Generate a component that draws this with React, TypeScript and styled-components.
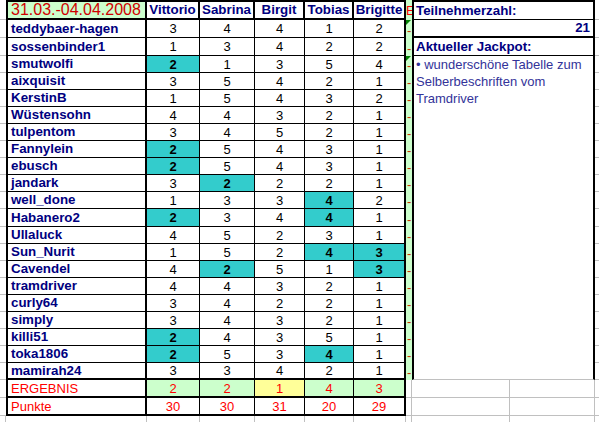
import React from "react";
import styled, { createGlobalStyle } from "styled-components";

const GlobalStyle = createGlobalStyle`
  html, body { margin: 0; padding: 0; background: #ffffff; }
  body { font-family: "Liberation Sans", Arial, sans-serif; overflow: hidden; }
`;

const NAVY = "#000080";
const INDIGO = "#333399";
const RED = "#ff0000";
const DATE_RED = "#d00000";
const TEAL = "#33cccc";
const LIGHT_GREEN = "#ccffcc";
const YELLOW = "#ffff99";
const GRID = "#c0c0c0";
const INK = "#000000";

const DATA_HEIGHTS = [18, 18, 17, 17, 17, 17, 17, 17, 17, 17, 17, 18, 17, 17, 17, 17, 17, 17, 17, 17, 17];
const ROW_HEIGHTS = [20, ...DATA_HEIGHTS, 18, 18, 6];

const PLAYERS = ["Vittorio", "Sabrina", "Birgit", "Tobias", "Brigitte"];

const ROWS: [string, number[], number[]][] = [
  ["teddybaer-hagen", [3, 4, 4, 1, 2], []],
  ["sossenbinder1", [1, 3, 4, 2, 2], []],
  ["smutwolfi", [2, 1, 3, 5, 4], [0]],
  ["aixquisit", [3, 5, 4, 2, 1], []],
  ["KerstinB", [1, 5, 4, 3, 2], []],
  ["Wüstensohn", [4, 4, 3, 2, 1], []],
  ["tulpentom", [3, 4, 5, 2, 1], []],
  ["Fannylein", [2, 5, 4, 3, 1], [0]],
  ["ebusch", [2, 5, 4, 3, 1], [0]],
  ["jandark", [3, 2, 2, 2, 1], [1]],
  ["well_done", [1, 3, 3, 4, 2], [3]],
  ["Habanero2", [2, 3, 4, 4, 1], [0, 3]],
  ["Ullaluck", [4, 5, 2, 3, 1], []],
  ["Sun_Nurit", [1, 5, 2, 4, 3], [3, 4]],
  ["Cavendel", [4, 2, 5, 1, 3], [1, 4]],
  ["tramdriver", [4, 4, 3, 2, 1], []],
  ["curly64", [3, 4, 2, 2, 1], []],
  ["simply", [3, 4, 3, 2, 1], []],
  ["killi51", [2, 4, 3, 5, 1], [0]],
  ["toka1806", [2, 5, 3, 4, 1], [0, 3]],
  ["mamirah24", [3, 3, 4, 2, 1], []],
];

const RESULT = [2, 2, 1, 4, 3];
const RESULT_WINNER = 2;
const POINTS = [30, 30, 31, 20, 29];
const FLAGGED_ROWS = [0, 2];

const RESULT_ROW = ROWS.length + 2;
const POINTS_ROW = ROWS.length + 3;
const REST_ROW = ROWS.length + 4;

const Sheet = styled.div`
  display: grid;
  grid-template-columns: 6px 141px 53px 55px 50px 49px 52px 6px 98px 85px 4px;
  grid-template-rows: ${ROW_HEIGHTS.map((h) => `${h}px`).join(" ")};
  width: 599px;
  height: 422px;
  overflow: hidden;
  background: #ffffff;
`;

const Cell = styled.div<{ $row: number }>`
  grid-row: ${(p) => p.$row};
  box-sizing: border-box;
  display: flex;
  align-items: center;
  min-width: 0;
  overflow: hidden;
  white-space: nowrap;
  line-height: 1;
  font-size: 13px;
`;

const GridCell = styled(Cell)<{ $col: number; $right?: boolean; $bottom?: boolean }>`
  grid-column: ${(p) => p.$col};
  border-right: ${(p) => (p.$right ? `1px solid ${GRID}` : "none")};
  border-bottom: ${(p) => (p.$bottom ? `1px solid ${GRID}` : "none")};
`;

const TitleCell = styled(Cell)`
  grid-column: 2;
  background: ${LIGHT_GREEN};
  color: ${DATE_RED};
  font-size: 16px;
  padding-left: 3px;
  border: 2px solid ${INK};
`;

const HeaderCell = styled(Cell)<{ $col: number }>`
  grid-column: ${(p) => p.$col};
  justify-content: center;
  color: ${NAVY};
  font-weight: bold;
  font-size: 13.33px;
  border-top: 2px solid ${INK};
  border-right: 2px solid ${INK};
  border-bottom: 2px solid ${INK};
`;

const NameCell = styled(Cell)<{ $last?: boolean }>`
  grid-column: 2;
  padding-left: 3px;
  color: ${NAVY};
  font-weight: bold;
  font-size: 13.33px;
  border-left: 2px solid ${INK};
  border-right: 2px solid ${INK};
  border-bottom: ${(p) => (p.$last ? 2 : 1)}px solid ${INK};
`;

const ScoreCell = styled(Cell)<{ $col: number; $hi?: boolean; $lastRow?: boolean; $lastCol?: boolean }>`
  grid-column: ${(p) => p.$col};
  justify-content: center;
  color: ${INK};
  background: ${(p) => (p.$hi ? TEAL : "#ffffff")};
  font-weight: ${(p) => (p.$hi ? "bold" : "normal")};
  border-right: ${(p) => (p.$lastCol ? 2 : 1)}px solid ${INK};
  border-bottom: ${(p) => (p.$lastRow ? 2 : 1)}px solid ${INK};
`;

const StripCell = styled(Cell)<{ $flag?: boolean; $head?: boolean }>`
  grid-column: 8;
  position: relative;
  background: ${LIGHT_GREEN};
  color: ${(p) => (p.$head ? RED : "#cc3300")};
  padding-left: ${(p) => (p.$head ? 0 : 1)}px;
  padding-top: ${(p) => (p.$head ? 0 : 2)}px;
  font-size: 13px;
  &::before {
    content: "";
    display: ${(p) => (p.$flag ? "block" : "none")};
    position: absolute;
    left: 0;
    top: 0;
    width: 0;
    height: 0;
    border-top: 5px solid #008000;
    border-right: 5px solid transparent;
  }
`;

const PanelLabel = styled(Cell)<{ $top?: boolean; $thickBottom?: boolean; $right?: boolean }>`
  grid-column: 9 / 11;
  justify-content: ${(p) => (p.$right ? "flex-end" : "flex-start")};
  padding: 0 3px 0 2px;
  color: ${NAVY};
  font-weight: bold;
  font-size: 13.33px;
  border-left: 2px solid ${INK};
  border-right: 2px solid ${INK};
  border-top: ${(p) => (p.$top ? `2px solid ${INK}` : "none")};
  border-bottom: ${(p) => (p.$thickBottom ? 2 : 1)}px solid ${INK};
`;

const PanelNote = styled.div`
  grid-column: 9 / 11;
  grid-row: 4 / ${RESULT_ROW};
  box-sizing: border-box;
  padding: 0 4px 0 2px;
  color: ${INDIGO};
  font-size: 13px;
  line-height: 17px;
  border-left: 2px solid ${INK};
  border-right: 2px solid ${INK};
  border-bottom: 1px solid ${GRID};
  overflow: hidden;
`;

const ResultLabel = styled(Cell)`
  grid-column: 2;
  padding-left: 3px;
  color: ${RED};
  border-left: 2px solid ${INK};
  border-right: 2px solid ${INK};
  border-bottom: 2px solid ${INK};
`;

const ResultCell = styled(Cell)<{ $col: number; $fill: string; $lastCol?: boolean }>`
  grid-column: ${(p) => p.$col};
  justify-content: center;
  color: ${RED};
  background: ${(p) => p.$fill};
  border-right: ${(p) => (p.$lastCol ? 2 : 1)}px solid ${INK};
  border-bottom: 2px solid ${INK};
`;

const Page = styled.main`
  display: block;
`;

export default function App() {
  const lastDataIndex = ROWS.length - 1;
  return (
    <Page>
      <GlobalStyle />
      <Sheet>
        {/* title row */}
        <GridCell $row={1} $col={1} $bottom />
        <TitleCell $row={1}>31.03.-04.04.2008</TitleCell>
        {PLAYERS.map((p, i) => (
          <HeaderCell key={p} $row={1} $col={3 + i}>
            {p}
          </HeaderCell>
        ))}
        <StripCell $row={1} $head>
          E
        </StripCell>
        <PanelLabel $row={1} $top>
          Teilnehmerzahl:
        </PanelLabel>
        <GridCell $row={1} $col={11} $bottom />

        {/* player rows */}
        {ROWS.map(([name, scores, hi], r) => {
          const row = r + 2;
          const last = r === lastDataIndex;
          return (
            <React.Fragment key={name}>
              <GridCell $row={row} $col={1} $bottom />
              <NameCell $row={row} $last={last}>
                {name}
              </NameCell>
              {scores.map((s, c) => (
                <ScoreCell
                  key={c}
                  $row={row}
                  $col={3 + c}
                  $hi={hi.includes(c)}
                  $lastRow={last}
                  $lastCol={c === scores.length - 1}
                >
                  {s}
                </ScoreCell>
              ))}
              <StripCell $row={row} $flag={FLAGGED_ROWS.includes(r)}>
                -
              </StripCell>
              <GridCell $row={row} $col={11} $bottom />
            </React.Fragment>
          );
        })}

        {/* info panel */}
        <PanelLabel $row={2} $right $thickBottom>
          21
        </PanelLabel>
        <PanelLabel $row={3}>Aktueller Jackpot:</PanelLabel>
        <PanelNote>• wunderschöne Tabelle zum Selberbeschriften vom Tramdriver</PanelNote>

        {/* result row */}
        <GridCell $row={RESULT_ROW} $col={1} $bottom />
        <ResultLabel $row={RESULT_ROW}>ERGEBNIS</ResultLabel>
        {RESULT.map((v, c) => (
          <ResultCell
            key={c}
            $row={RESULT_ROW}
            $col={3 + c}
            $fill={c === RESULT_WINNER ? YELLOW : LIGHT_GREEN}
            $lastCol={c === RESULT.length - 1}
          >
            {v}
          </ResultCell>
        ))}
        <GridCell $row={RESULT_ROW} $col={8} $right $bottom />
        <GridCell $row={RESULT_ROW} $col={9} $right $bottom />
        <GridCell $row={RESULT_ROW} $col={10} $right $bottom />
        <GridCell $row={RESULT_ROW} $col={11} $bottom />

        {/* points row */}
        <GridCell $row={POINTS_ROW} $col={1} $bottom />
        <ResultLabel $row={POINTS_ROW}>Punkte</ResultLabel>
        {POINTS.map((v, c) => (
          <ResultCell key={c} $row={POINTS_ROW} $col={3 + c} $fill="#ffffff" $lastCol={c === POINTS.length - 1}>
            {v}
          </ResultCell>
        ))}
        <GridCell $row={POINTS_ROW} $col={8} $right $bottom />
        <GridCell $row={POINTS_ROW} $col={9} $right $bottom />
        <GridCell $row={POINTS_ROW} $col={10} $right $bottom />
        <GridCell $row={POINTS_ROW} $col={11} $bottom />

        {/* partial bottom row */}
        {[1, 2, 3, 4, 5, 6, 7, 8, 9, 10].map((c) => (
          <GridCell key={c} $row={REST_ROW} $col={c} $right />
        ))}
      </Sheet>
    </Page>
  );
}
